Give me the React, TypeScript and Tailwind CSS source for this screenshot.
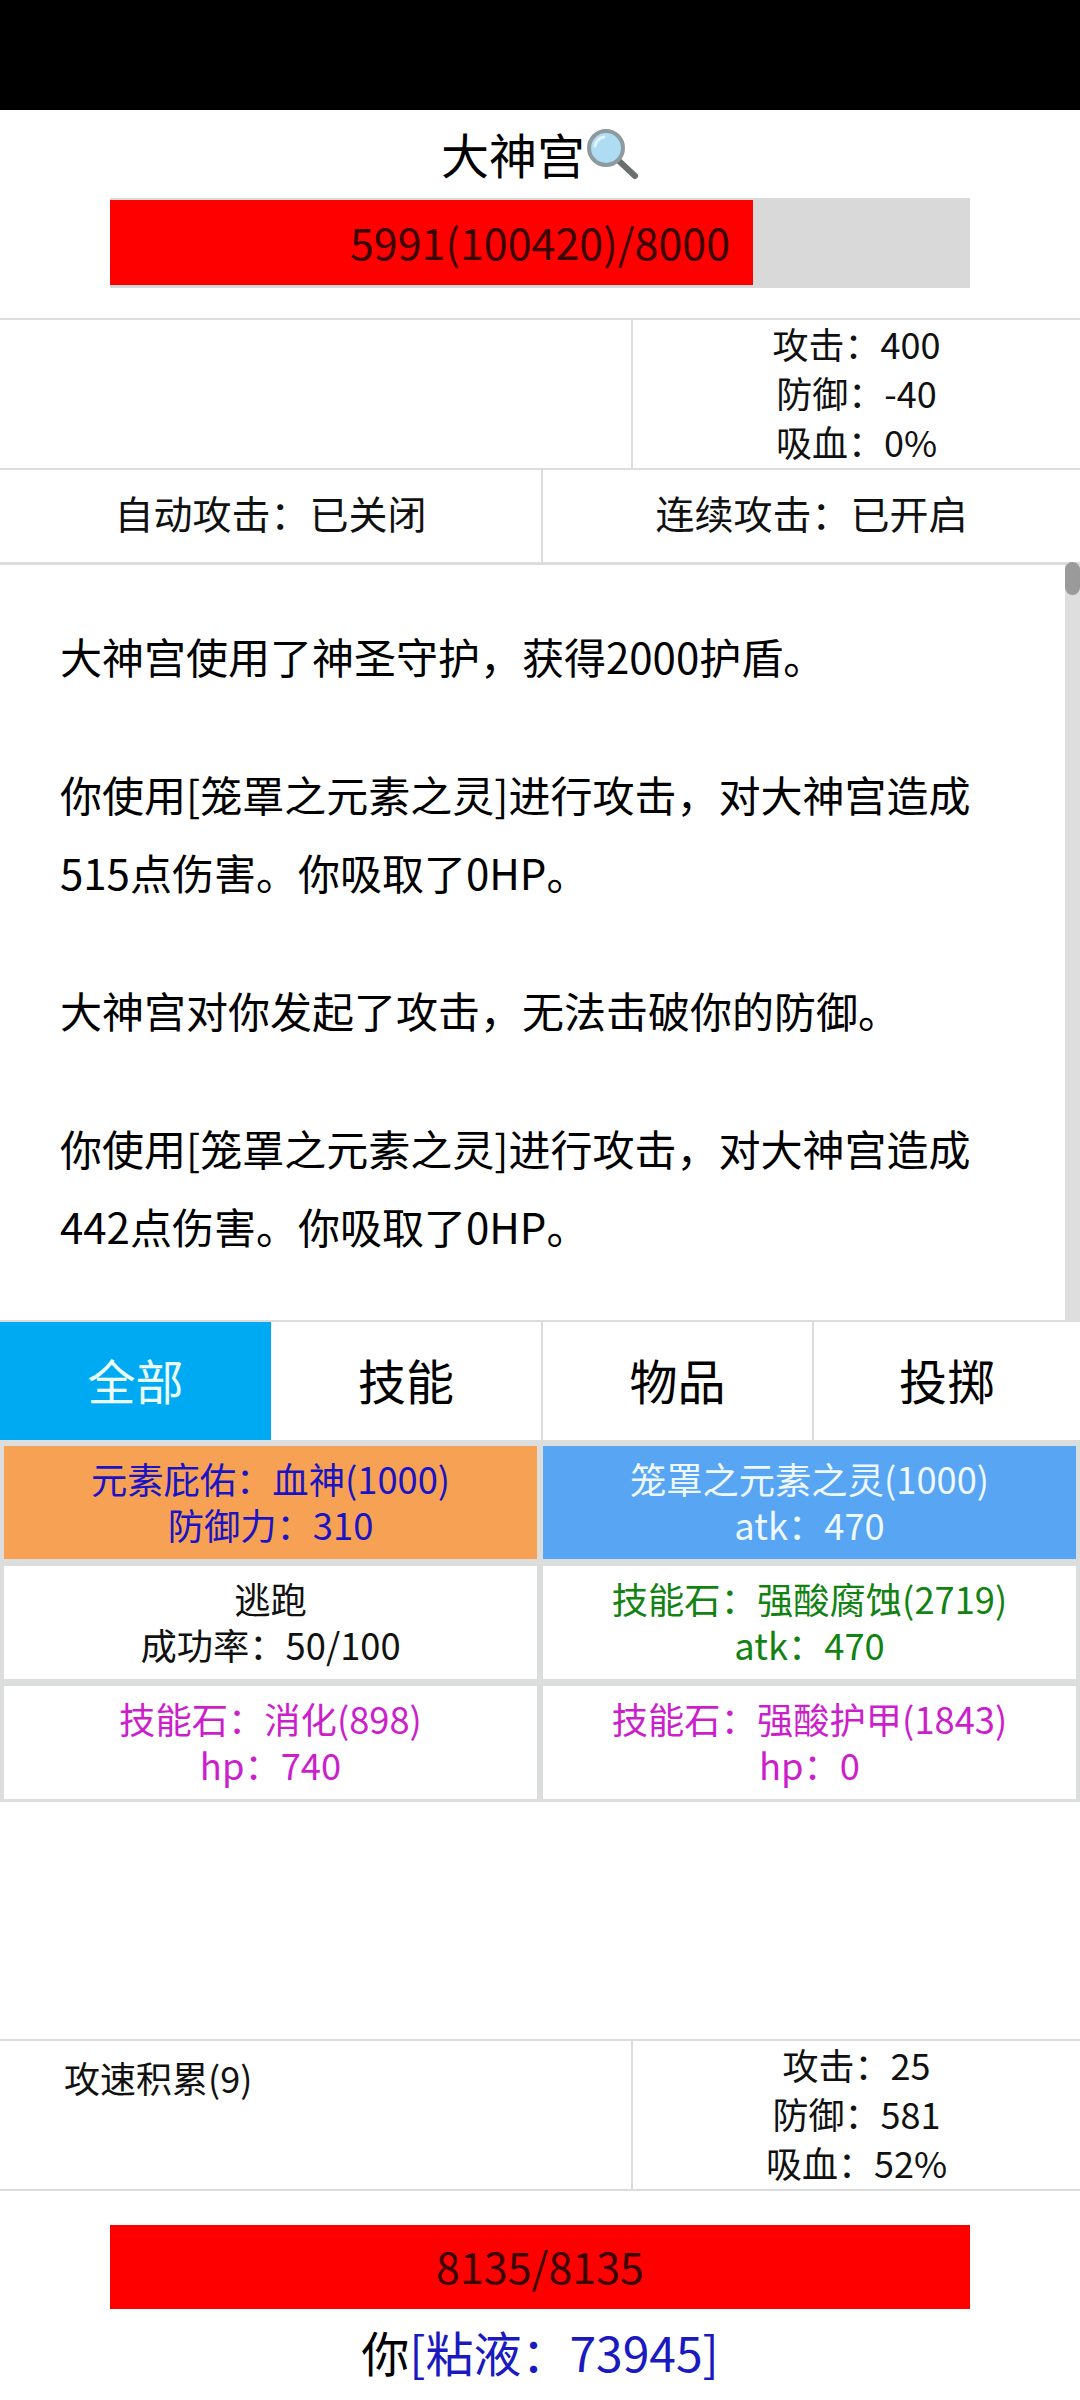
const LOG = [
  ['大神宫使用了神圣守护，获得2000护盾。'],
  ['你使用[笼罩之元素之灵]进行攻击，对大神宫造成', '515点伤害。你吸取了0HP。'],
  ['大神宫对你发起了攻击，无法击破你的防御。'],
  ['你使用[笼罩之元素之灵]进行攻击，对大神宫造成', '442点伤害。你吸取了0HP。'],
]

const ACTIONS = [
  { name: '元素庇佑：血神(1000)', sub: '防御力：310', className: 'bg-[#f6a153] text-[#1a14c4]' },
  { name: '笼罩之元素之灵(1000)', sub: 'atk：470', className: 'bg-[#57a5f3] text-[#eef8ff]' },
  { name: '逃跑', sub: '成功率：50/100', className: 'bg-white text-[#111111]' },
  { name: '技能石：强酸腐蚀(2719)', sub: 'atk：470', className: 'bg-white text-[#128212]' },
  { name: '技能石：消化(898)', sub: 'hp：740', className: 'bg-white text-[#cc1fcc]' },
  { name: '技能石：强酸护甲(1843)', sub: 'hp：0', className: 'bg-white text-[#cc1fcc]' },
]

function Magnifier() {
  return (
    <svg width="54" height="54" viewBox="0 0 54 54" className="shrink-0">
      <line x1="33" y1="33" x2="50" y2="49" stroke="#6b6f70" strokeWidth="6" strokeLinecap="round" />
      <circle cx="21" cy="21" r="17" fill="#aedcf2" stroke="#8f9a9e" strokeWidth="4" />
      <path d="M10 19a11 11 0 0 1 9-9" fill="none" stroke="#e4f5fc" strokeWidth="3" strokeLinecap="round" />
    </svg>
  )
}

function Stats({ rows, children }: { rows: string[]; children?: React.ReactNode }) {
  return (
    <div className="flex h-[148px]">
      <div className="w-[633px] border-r-2 border-[#dcdcdc] text-[36px] text-[#111111] pl-[64px] pt-[11px] leading-[50px]">
        {children}
      </div>
      <div className="flex-1 flex flex-col justify-center items-center pb-[4px] text-[36px] leading-[49px] text-[#111111]">
        {rows.map(row => (
          <div key={row}>{row}</div>
        ))}
      </div>
    </div>
  )
}

export default function App() {
  return (
    <div className="w-[1080px] h-[2400px] bg-white text-black overflow-hidden flex flex-col font-['Noto_Sans_CJK_SC','Noto_Sans',sans-serif]">
      <div className="h-[110px] bg-black shrink-0" />

      {/* enemy */}
      <div className="h-[88px] flex items-center justify-center text-[48px]">
        <span className="pb-[2px]">大神宫</span>
        <Magnifier />
      </div>
      <div className="relative mx-[110px] h-[90px] bg-[#d9d9d9] flex items-center justify-center text-[43px] text-[#3a0000]">
        <div className="absolute left-0 top-[2px] bottom-[3px] w-[643px] bg-[#ff0000]" />
        <span className="relative pb-[3px]">5991(100420)/8000</span>
      </div>
      <div className="h-[30px]" />

      <div className="h-[2px] bg-[#dcdcdc]" />
      <Stats rows={['攻击：400', '防御：-40', '吸血：0%']} />
      <div className="h-[2px] bg-[#dcdcdc]" />

      <div className="h-[92px] flex text-[39px] text-[#111111]">
        <div className="w-[543px] border-r-2 border-[#dcdcdc] flex items-center justify-center pb-[7px]">自动攻击：已关闭</div>
        <div className="flex-1 flex items-center justify-center pb-[7px]">连续攻击：已开启</div>
      </div>
      <div className="h-[3px] bg-[#dcdcdc]" />

      {/* battle log */}
      <div className="h-[755px] flex">
        <div className="flex-1 pl-[60px] pt-[52px] text-[42px] leading-[78px] flex flex-col gap-[60px]">
          {LOG.map((lines, i) => (
            <p key={i}>
              {lines.map(line => (
                <span key={line} className="block whitespace-nowrap">{line}</span>
              ))}
            </p>
          ))}
        </div>
        <div className="w-[15px] bg-[#dedede] relative">
          <div className="absolute -top-[3px] inset-x-0 h-[33px] rounded-full bg-[#9a9a9a]" />
        </div>
      </div>
      <div className="h-[2px] bg-[#dcdcdc]" />

      {/* tabs */}
      <div className="h-[118px] flex text-[48px]">
        <div className="w-[271px] bg-[#00aaf2] text-[#eaffff] flex items-center justify-center pb-[5px]">全部</div>
        <div className="w-[272px] border-r-2 border-[#dcdcdc] flex items-center justify-center pb-[5px]">技能</div>
        <div className="w-[271px] border-r-2 border-[#dcdcdc] flex items-center justify-center pb-[5px]">物品</div>
        <div className="flex-1 flex items-center justify-center pb-[5px]">投掷</div>
      </div>

      {/* actions */}
      <div className="bg-[#dcdedd] p-[4px] pt-[6px] pb-[3px] grid grid-cols-2 gap-x-[6px] gap-y-[7px]">
        {ACTIONS.map(action => (
          <div
            key={action.name}
            className={`h-[113px] flex flex-col items-center justify-center pb-[4px] text-[36.3px] leading-[46px] ${action.className}`}
          >
            <div>{action.name}</div>
            <div>{action.sub}</div>
          </div>
        ))}
      </div>

      <div className="flex-1" />

      {/* player */}
      <div className="h-[2px] bg-[#dcdcdc]" />
      <Stats rows={['攻击：25', '防御：581', '吸血：52%']}>攻速积累(9)</Stats>
      <div className="h-[2px] bg-[#dcdcdc]" />

      <div className="mt-[34px] mx-[110px] h-[84px] bg-[#ff0000] flex items-center justify-center pb-[3px] text-[43px] text-[#3a0000]">
        8135/8135
      </div>
      <div className="h-[91px] pb-[7px] flex items-center justify-center text-[48px]">
        你<span className="text-[#1a1ac0]">[粘液：73945]</span>
      </div>
    </div>
  )
}
